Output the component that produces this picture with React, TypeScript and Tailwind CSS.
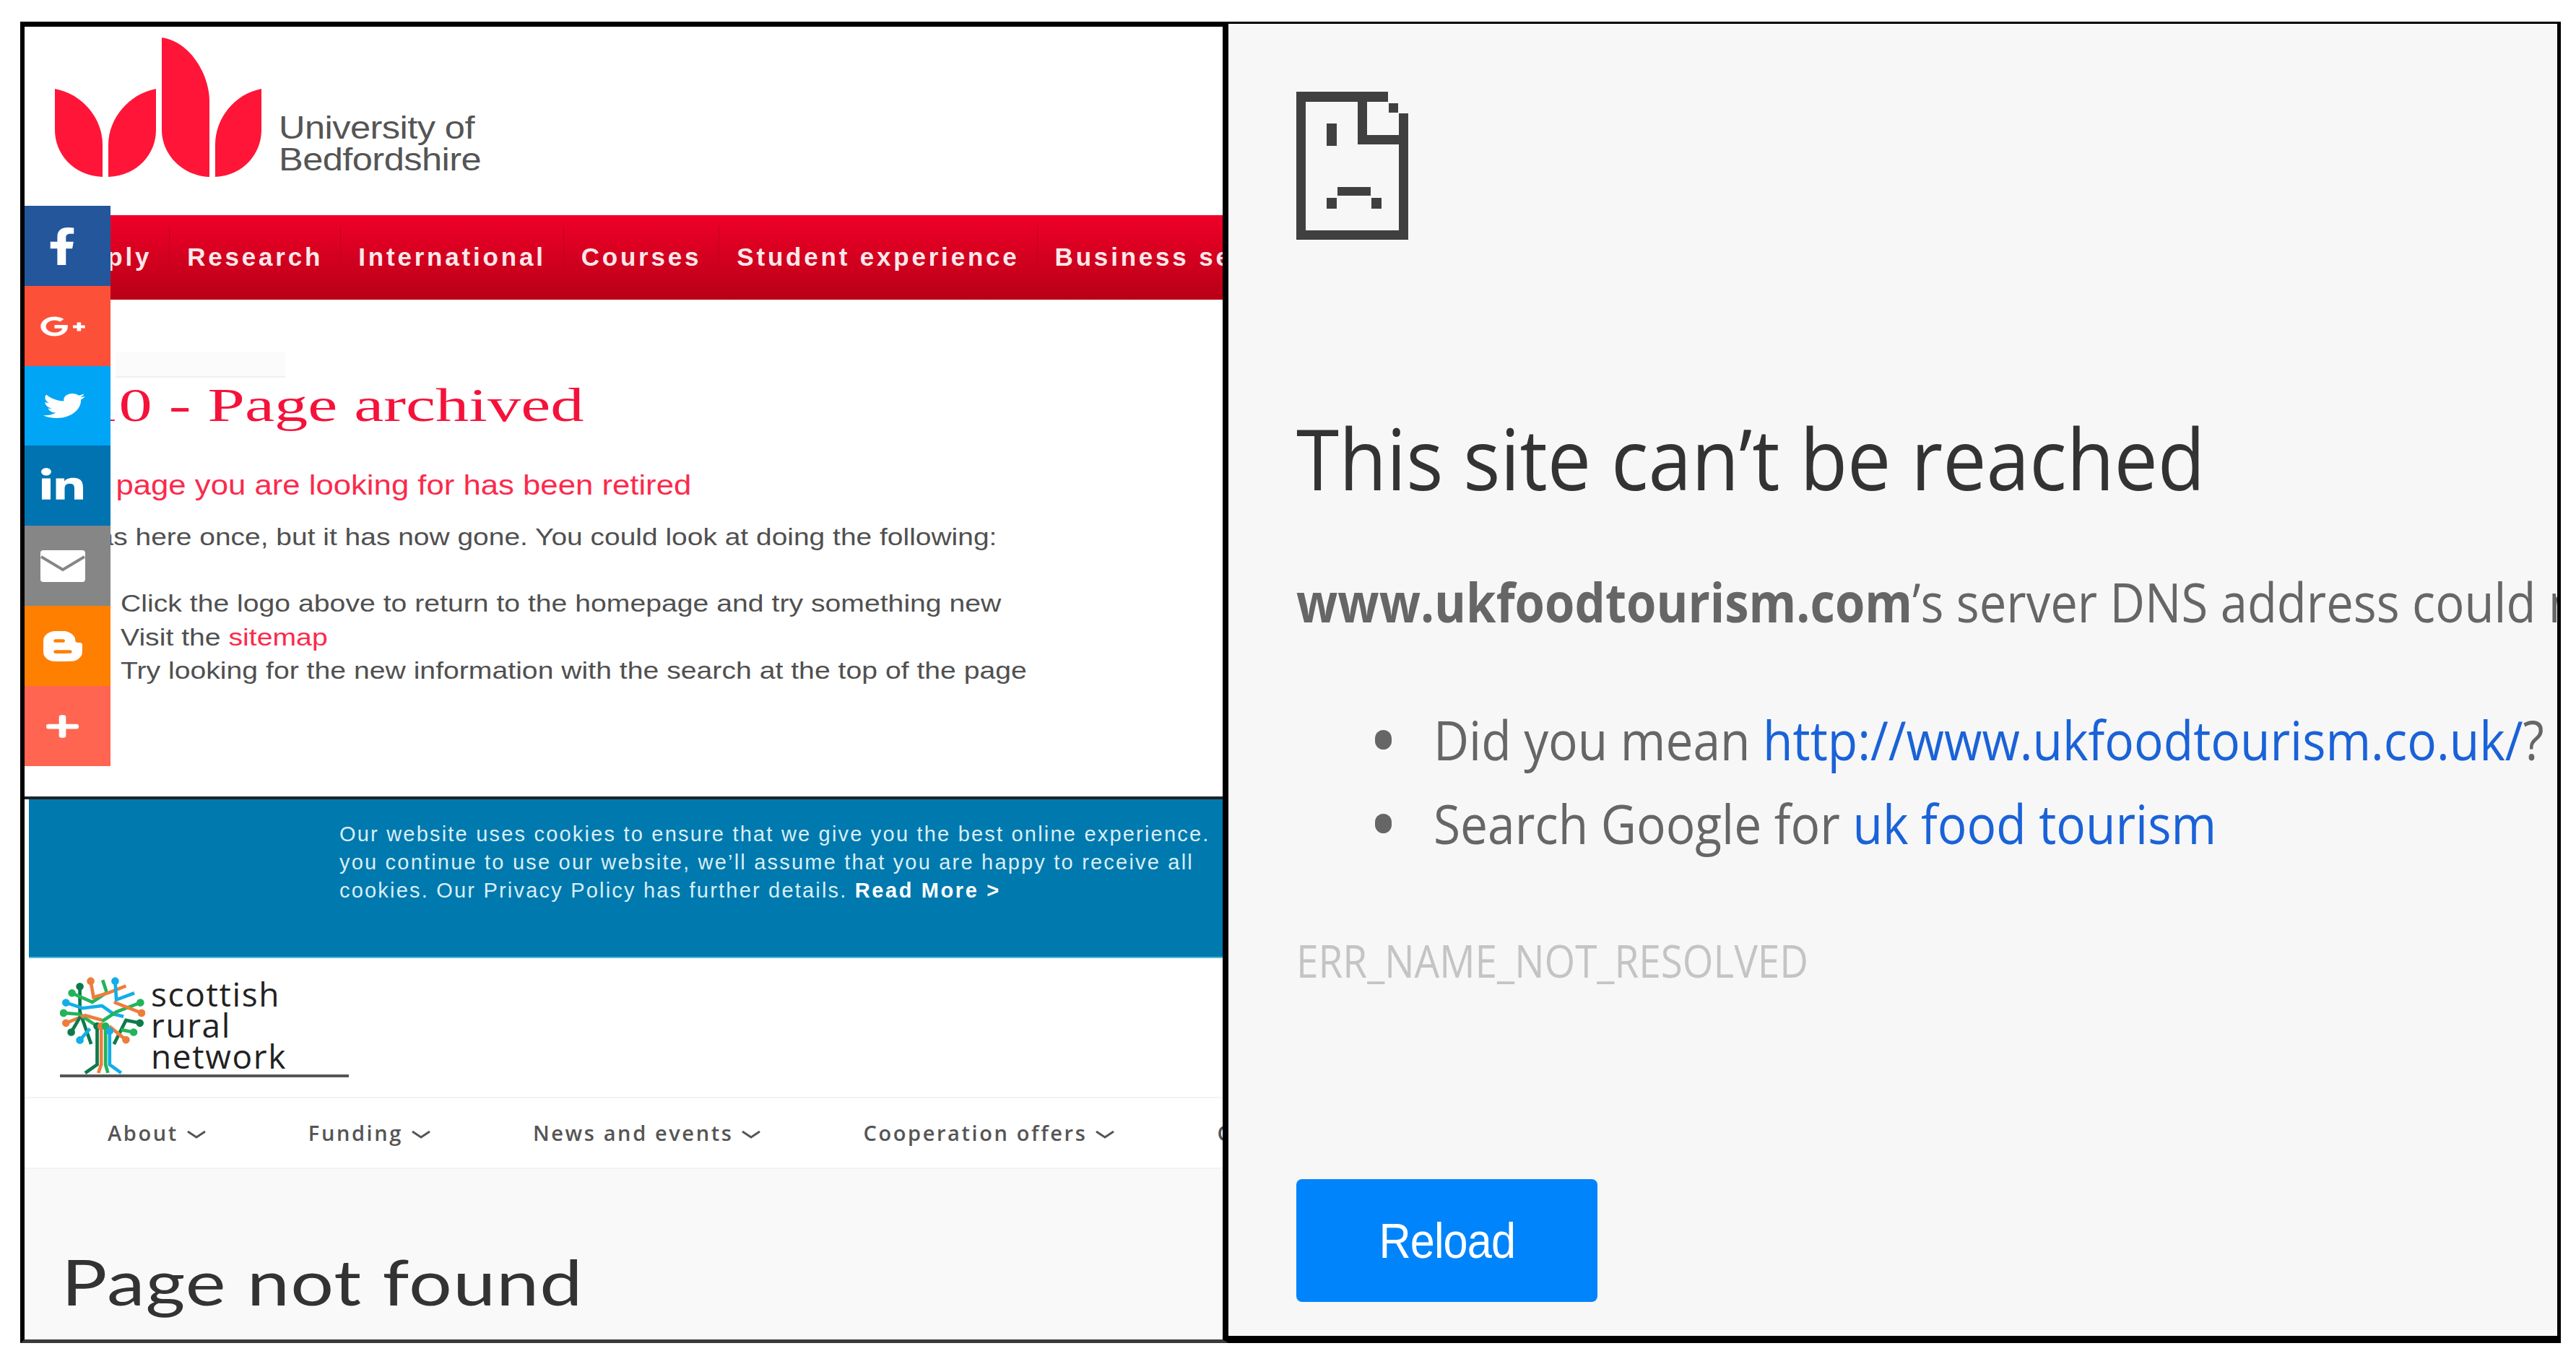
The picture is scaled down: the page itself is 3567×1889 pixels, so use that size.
import { FaBloggerB, FaFacebookF, FaGooglePlusG, FaLinkedinIn, FaPlus, FaTwitter } from 'react-icons/fa';

const uniNav = ['Apply', 'Research', 'International', 'Courses', 'Student experience', 'Business services'];
const srnNav = ['About', 'Funding', 'News and events', 'Cooperation offers'];

function UniLogo() {
  return (
    <svg viewBox="76 52 286 193" className="h-[193px] w-[286px] shrink-0" fill="#ff1538">
      <path d="M76 123C115 130 142 165 142 200L142 245C100 243 76 212 76 180Z" />
      <path d="M216 123C178 130 150 165 150 200L150 245C192 243 216 212 216 180Z" />
      <path d="M224 52C265 58 290 105 290 140L290 245C250 243 224 212 224 180Z" />
      <path d="M362 123C324 130 298 165 298 200L298 245C338 243 362 212 362 180Z" />
    </svg>
  );
}

function SadPage() {
  return (
    <svg viewBox="345 320 465 615" className="h-[205px] w-[155px]" fill="#404040" shapeRendering="crispEdges">
      <rect x="345" y="320" width="40" height="615" />
      <rect x="345" y="320" width="380" height="42" />
      <rect x="345" y="895" width="465" height="40" />
      <rect x="770" y="410" width="40" height="525" />
      <rect x="600" y="362" width="40" height="178" />
      <rect x="600" y="500" width="170" height="40" />
      <rect x="730" y="368" width="38" height="40" />
      <rect x="470" y="452" width="42" height="93" />
      <rect x="515" y="715" width="140" height="37" />
      <rect x="470" y="762" width="42" height="43" />
      <rect x="658" y="762" width="42" height="43" />
    </svg>
  );
}

function Tree() {
  const branches: [string, string][] = [
    ['#0d7a4c', 'M148 145V250L195 385'],
    ['#22b45a', 'M115 172L200 210L260 170L243 118'],
    ['#ee7d3c', 'M193 122L205 190L270 170L340 142'],
    ['#12aee8', 'M295 122L300 200L375 172'],
    ['#12aee8', 'M90 212L160 235L240 225L290 260L330 270'],
    ['#22b45a', 'M80 255L145 260L220 310'],
    ['#ee7d3c', 'M90 297L170 265L240 285'],
    ['#0d7a4c', 'M112 335L150 270'],
    ['#12aee8', 'M148 368L190 320'],
    ['#22b45a', 'M400 212L300 250L240 290'],
    ['#ee7d3c', 'M405 255L290 210'],
    ['#0d7a4c', 'M398 297L340 285L290 385'],
    ['#22b45a', 'M372 335L320 325'],
    ['#ee7d3c', 'M340 367L270 310'],
    ['#0d7a4c', 'M220 310V470L170 505'],
    ['#ee7d3c', 'M237 310V470L225 505'],
    ['#22b45a', 'M255 310V470L265 505'],
    ['#12aee8', 'M272 330V470L320 505'],
  ];
  return (
    <svg viewBox="65 100 355 410" className="h-[137px] w-[118px] shrink-0" fill="none" strokeWidth="14">
      {branches.map(([color, d]) => {
        const start = d.slice(1).split(/[LVH]/)[0].split(' ');
        return (
          <g key={d} stroke={color}>
            <path d={d} />
            <circle cx={start[0]} cy={start[1]} r="9" fill={color} />
          </g>
        );
      })}
    </svg>
  );
}

function SocialBar() {
  return (
    <div className="absolute left-0 top-[248px] flex w-[119px] flex-col text-white">
      <div className="flex h-[111px] items-center bg-[#23569b] pl-[33px]">
        <FaFacebookF preserveAspectRatio="none" className="h-[52px] w-[38px]" />
      </div>
      <div className="flex h-[111px] items-center bg-[#fd5039] pl-[21px]">
        <FaGooglePlusG preserveAspectRatio="none" className="h-[36px] w-[64px]" />
      </div>
      <div className="flex h-[110px] items-center bg-[#00a5f6] pl-[26px]">
        <FaTwitter preserveAspectRatio="none" className="h-[42px] w-[58px]" />
      </div>
      <div className="flex h-[111px] items-center bg-[#0073b0] pl-[23px]">
        <FaLinkedinIn preserveAspectRatio="none" className="h-[50px] w-[58px]" />
      </div>
      <div className="flex h-[111px] items-center bg-[#868686] pl-[22px]">
        <svg viewBox="0 0 62 44" className="h-[44px] w-[62px]">
          <rect width="62" height="44" rx="4" fill="#fff" />
          <path d="M1 9L31 27L61 9" fill="none" stroke="#868686" strokeWidth="4" />
        </svg>
      </div>
      <div className="flex h-[111px] items-center bg-[#ff7f00] pl-[26px]">
        <FaBloggerB preserveAspectRatio="none" className="h-[48px] w-[54px]" />
      </div>
      <div className="flex h-[111px] items-center bg-[#ff6550] pl-[30px]">
        <FaPlus preserveAspectRatio="none" className="h-[36px] w-[45px]" />
      </div>
    </div>
  );
}

function UniversityPanel() {
  return (
    <div className="relative h-[1066px] overflow-hidden bg-white font-['Liberation_Sans',sans-serif]">
      <div className="flex items-end pl-[42px] pt-[15px]">
        <UniLogo />
        <div className="mb-[2px] ml-[24px] origin-left scale-x-[1.15] text-[44px] leading-[44px] tracking-[-0.5px] text-[#555]">
          <div>University of</div>
          <div>Bedfordshire</div>
        </div>
      </div>
      <div className="mt-[53px] flex h-[117px] items-center whitespace-nowrap bg-linear-to-b from-[#f00028] to-[#b80016] pl-[36px] text-[35px] font-bold tracking-[3.8px] text-[#fde8ea]">
        {uniNav.map((item) => (
          <div key={item} className="flex h-[88px] items-center border-r border-[#c40020] px-[24px]">
            {item}
          </div>
        ))}
      </div>
      <div className="ml-[126px] mt-[73px] h-[35px] w-[235px] border-b-2 border-[#f0f0f0] bg-[#fbfbfb]" />
      <h1 className="ml-[38px] origin-left scale-x-[1.4] whitespace-nowrap font-['Liberation_Serif',serif] text-[66px] leading-[76px] text-[#f5123a]">
        410 - Page archived
      </h1>
      <p className="ml-[39px] mt-[50px] origin-left scale-x-[1.15] whitespace-nowrap text-[38px] leading-[46px] text-[#fb2a4c]">
        The page you are looking for has been retired
      </p>
      <p className="ml-[41px] mt-[26px] origin-left scale-x-[1.18] whitespace-nowrap text-[33px] leading-[46px] text-[#505050]">
        It was here once, but it has now gone. You could look at doing the following:
      </p>
      <ul className="ml-[133px] mt-[46px] origin-left scale-x-[1.187] whitespace-nowrap text-[33px] leading-[46.5px] text-[#505050]">
        <li>Click the logo above to return to the homepage and try something new</li>
        <li>
          Visit the <span className="text-[#fb2a4c]">sitemap</span>
        </li>
        <li>Try looking for the new information with the search at the top of the page</li>
      </ul>
      <SocialBar />
    </div>
  );
}

function ScottishPanel() {
  return (
    <div className="flex-1 overflow-hidden bg-white">
      <div className="ml-[6px] h-[220px] border-b-2 border-[#4fb9dc] bg-[#0079ae] pl-[430px] pt-[29px] font-['Liberation_Sans',sans-serif] text-[29px] leading-[39px] tracking-[2.2px] whitespace-nowrap text-[#d9eff6]">
        <div>Our website uses cookies to ensure that we give you the best online experience.</div>
        <div>you continue to use our website, we’ll assume that you are happy to receive all</div>
        <div>
          cookies. Our Privacy Policy has further details. <b className="tracking-[2.6px] text-white">Read More &gt;</b>
        </div>
      </div>
      <div className="h-[192px] pl-[49px] pt-[26px]">
        <div className="flex h-[139px] w-[400px] items-end gap-[8px] border-b-4 border-[#555]">
          <Tree />
          <div className="pb-[4px] font-['Open_Sans',sans-serif] text-[46px] leading-[43px] tracking-[1.6px] text-[#222]">
            <div>scottish</div>
            <div>rural</div>
            <div>network</div>
          </div>
        </div>
      </div>
      <div className="flex h-[100px] items-center gap-[141px] overflow-hidden whitespace-nowrap border-y-2 border-[#f3f3f3] pl-[115px] font-['Open_Sans',sans-serif] text-[29px] font-semibold tracking-[2.6px] text-[#555]">
        {srnNav.map((item) => (
          <div key={item} className="flex items-center gap-[11px]">
            {item}
            <svg viewBox="0 0 28 12" className="mt-[3px] h-[12px] w-[28px]" fill="none" stroke="#555" strokeWidth="3">
              <path d="M2 2L14 10L26 2" />
            </svg>
          </div>
        ))}
        <div>Contact</div>
      </div>
      <div className="h-[300px] bg-[#f9f9f9] pl-[51px] pt-[105px] font-['Lato',sans-serif] text-[88px] leading-[100px] tracking-[1px] text-[#333]">
        <div className="origin-left scale-x-[1.2]">Page not found</div>
      </div>
    </div>
  );
}

function ChromeError() {
  return (
    <div className="h-full w-[1845px] overflow-hidden whitespace-nowrap border-r-[5px] border-t-[3px] border-b-[10px] border-black bg-[#f7f7f7] pl-[94px] pt-[94px] font-['Open_Sans',sans-serif]">
      <SadPage />
      <h1 className="mt-[237px] origin-left scale-x-[0.918] text-[117px] leading-[130px] text-[#333]">
        This site can’t be reached
      </h1>
      <p className="mt-[84px] origin-left scale-x-[0.893] text-[75px] leading-[100px] text-[#666]">
        <b>www.ukfoodtourism.com</b>’s server DNS address could not be found.
      </p>
      <ul className="mt-[83px] text-[#666]">
        <li className="flex h-[116px] items-center">
          <span className="ml-[109px] h-[27px] w-[23px] shrink-0 rounded-full bg-[#666]" />
          <span className="ml-[58px] origin-left scale-x-[0.902] text-[75px]">
            Did you mean <span className="text-[#1a62d8]">http://www.ukfoodtourism.co.uk/</span>?
          </span>
        </li>
        <li className="flex h-[116px] items-center">
          <span className="ml-[109px] h-[27px] w-[23px] shrink-0 rounded-full bg-[#666]" />
          <span className="ml-[58px] origin-left scale-x-[0.902] text-[75px]">
            Search Google for <span className="text-[#1a62d8]">uk food tourism</span>
          </span>
        </li>
      </ul>
      <p className="mt-[92px] origin-left scale-x-[0.885] text-[62px] leading-[80px] text-[#c4c4c4]">
        ERR_NAME_NOT_RESOLVED
      </p>
      <button className="mt-[263px] flex h-[170px] w-[417px] items-center justify-center rounded-[8px] bg-[#0084fb] font-['Liberation_Sans',sans-serif] text-[68px] tracking-[-1px] text-white">
        <span className="scale-x-[0.9]">Reload</span>
      </button>
    </div>
  );
}

export default function App() {
  return (
    <div className="h-[1889px] w-[3567px] overflow-hidden bg-white pl-[28px] pt-[30px]">
      <div className="flex h-[1830px] w-[3518px]">
        <div className="flex h-full w-[1673px] flex-col border-x-[6px] border-r-[8px] border-t-[7px] border-b-[5px] border-black border-b-[#3a3a3a]">
          <UniversityPanel />
          <div className="h-[4px] shrink-0 bg-[#222]" />
          <ScottishPanel />
        </div>
        <ChromeError />
      </div>
    </div>
  );
}
